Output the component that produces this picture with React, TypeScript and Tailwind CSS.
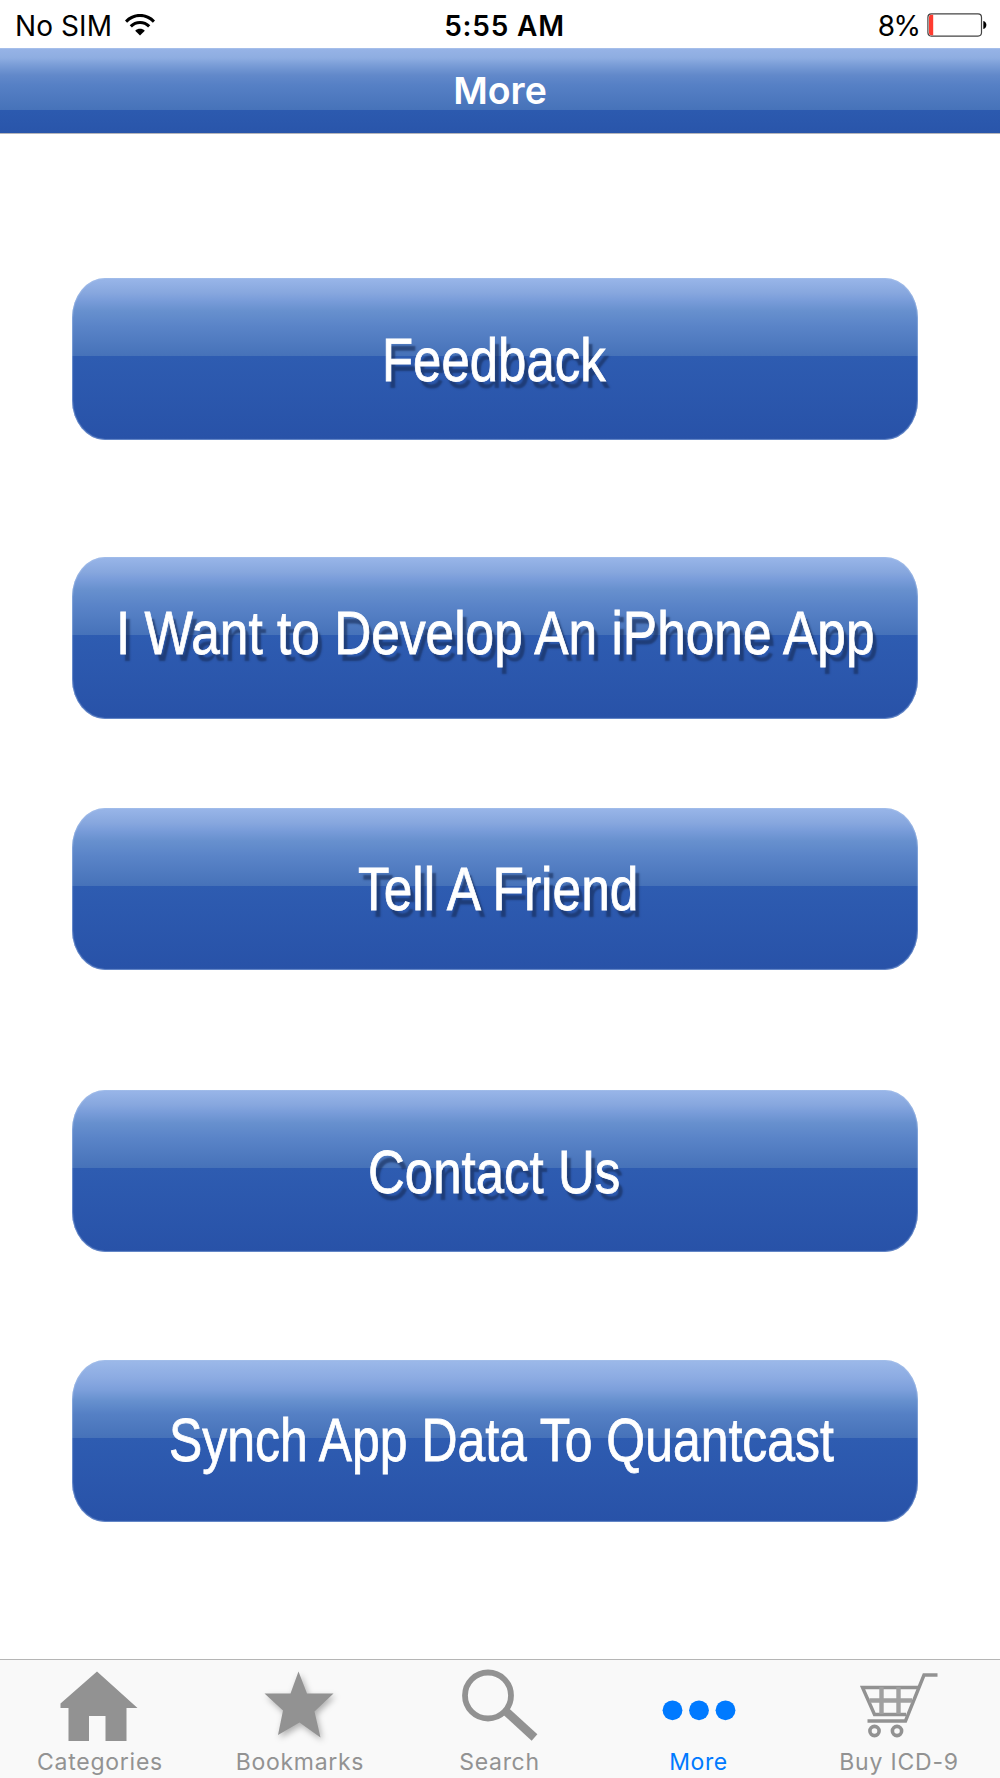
import React from 'react';

const WifiIcon: React.FC<{ className?: string }> = ({ className }) => (
  <svg className={className} viewBox="0 0 30 22" fill="none" stroke="#000" strokeWidth="3.1">
    <path d="M1 7.6C9 -0.6 21 -0.6 29 7.6" />
    <path d="M5.8 12.4C11 7.2 19 7.2 24.2 12.4" />
    <path d="M15 21.6L10.2 16.7C12.9 14.1 17.1 14.1 19.8 16.7Z" fill="#000" stroke="none" />
  </svg>
);

const BatteryIcon: React.FC<{ className?: string }> = ({ className }) => (
  <svg className={className} viewBox="0 0 60 24" fill="none">
    <rect x="0.9" y="0.9" width="53.6" height="22.2" rx="3.5" stroke="#444" strokeWidth="1.2" />
    <path d="M2 4a2.2 2.2 0 0 1 2.2-2.2H6.2V22.2H4.2A2.2 2.2 0 0 1 2 20Z" fill="#ff3b30" />
    <path d="M56.3 8C60.4 8.6 60.4 15.4 56.3 16Z" fill="#000" />
  </svg>
);

const HomeIcon = () => (
  <svg className="w-[78px] h-[72px] mr-[3px]" viewBox="0 0 78 72" fill="#929292">
    <path d="M37 0.5L77.5 37H66.5V70H45.5V45H29V70H8.5V37H0.5V32.5Z" />
  </svg>
);

const StarIcon = () => (
  <svg className="w-[78px] h-[72px] overflow-visible drop-shadow-[2px_3px_3px_rgba(0,0,0,0.3)]" viewBox="0 0 78 72" fill="#929292">
    <path d="M37.5 0.5L46 22.5H72.5L53.5 40.5L59.5 66.5L38.5 51.5L17 64L22 39.5L3.5 22.5H29.5Z" />
  </svg>
);

const SearchIcon = () => (
  <svg className="w-[78px] h-[72px] overflow-visible" viewBox="0 0 78 72" fill="none" stroke="#929292">
    <circle cx="27" cy="24.5" r="23" strokeWidth="5.8" />
    <path d="M44.5 40L73.5 66.5" strokeWidth="8.5" />
  </svg>
);

const MoreIcon = () => (
  <svg className="w-[74px] h-[72px] mr-[3px]" viewBox="0 0 74 72" fill="#007aff">
    <circle cx="10.5" cy="39.3" r="9.9" />
    <circle cx="37" cy="39.3" r="9.9" />
    <circle cx="63.5" cy="39.3" r="9.9" />
  </svg>
);

const CartIcon = () => (
  <svg className="w-[78px] h-[72px] mr-[2px]" viewBox="0 0 78 72" fill="none" stroke="#929292" strokeWidth="3.4">
    <path d="M77.5 4H64L45.5 50H7.5" />
    <path d="M58 16.5H2.5L14.5 43.500H46" />
    <path d="M9.5 29.5H52M21.5 16V43M38.5 16V43" stroke="#a0a0a0" strokeWidth="4.4" />
    <circle cx="14.5" cy="60" r="4.6" strokeWidth="3.6" />
    <circle cx="37" cy="60" r="4.6" strokeWidth="3.6" />
  </svg>
);

const shadow = '[text-shadow:5px_7px_2px_rgba(22,42,84,0.6)]';
const glossy = 'bg-[linear-gradient(to_bottom,#99b6e9_0px,#87a7de_15px,#7a9dda_22px,#6790ce_33px,#5a84c8_48px,#4672b9_78px,#2e5cb1_78px,#2852a8_162px)]';
const glossyLight = 'bg-[linear-gradient(to_bottom,#9cb9e9_0px,#8cabe2_18px,#7c9fdb_30px,#6690ce_41px,#5580c5_54px,#4672b9_78px,#2e5cb1_78px,#2852a8_162px)]';

const buttons = [
  { label: 'Feedback', box: `mt-[144px] ${glossy}`, text: `pl-[309.5px] pt-[47px] ${shadow}`, scale: 'scale-x-[0.835]' },
  { label: 'I Want to Develop An iPhone App', box: `mt-[116.5px] ${glossy}`, text: `pl-[43.5px] pt-[41.5px] ${shadow}`, scale: 'scale-x-[0.843]' },
  { label: 'Tell A Friend', box: `mt-[89.5px] ${glossy}`, text: `pl-[285.5px] pt-[46px] ${shadow}`, scale: 'scale-x-[0.844]' },
  { label: 'Contact Us', box: `mt-[120px] ${glossy}`, text: `pl-[295.5px] pt-[47px] ${shadow}`, scale: 'scale-x-[0.836]' },
  { label: 'Synch App Data To Quantcast', box: `mt-[108px] ${glossyLight}`, text: 'pl-[97px] pt-[45px]', scale: 'scale-x-[0.818]' },
];

const tabs = [
  { name: 'Categories', icon: <HomeIcon />, active: false, tracking: 'tracking-[0.75px]' },
  { name: 'Bookmarks', icon: <StarIcon />, active: false, tracking: 'tracking-[0.7px]' },
  { name: 'Search', icon: <SearchIcon />, active: false, tracking: 'tracking-[0.7px] mr-[1px]' },
  { name: 'More', icon: <MoreIcon />, active: true, tracking: 'tracking-[0.6px] mr-[3px]' },
  { name: 'Buy ICD-9', icon: <CartIcon />, active: false, tracking: 'tracking-[0.8px] mr-[2px]' },
];

const StatusBar: React.FC = () => {
  return (
    <div className="grid grid-cols-3 items-center h-12 pt-[3px] pl-[15px] pr-[13px] text-[28px] leading-none text-black">
      <div className="flex items-center">
        <span className="tracking-[0.1px]">No SIM</span>
        <WifiIcon className="w-[30px] h-[22px] ml-[13px] -mt-[2px]" />
      </div>
      <span className="pl-[7px] text-center font-semibold tracking-[0.8px]">5:55 AM</span>
      <div className="flex items-center justify-end">
        <span className="tracking-[-1.5px]">8%</span>
        <BatteryIcon className="w-[60px] h-6 ml-[7.5px] -mt-px" />
      </div>
    </div>
  );
};

const NavBar: React.FC = () => {
  return (
    <header className="flex justify-center h-[86px] pt-[24px] border-b border-[#b5b5ba] bg-[linear-gradient(to_bottom,#b4c9ee_0px,#96b3e6_1px,#8eade1_10px,#7a9dd7_17px,#6289ca_27px,#5680c5_37px,#4672b9_62.5px,#2c5aaf_62.5px,#2955aa_86px)]">
      <h1 className="text-[37.5px] leading-none font-semibold text-white">More</h1>
    </header>
  );
};

const TabBar: React.FC = () => {
  return (
    <nav className="grid grid-cols-5 h-[119px] mt-auto border-t border-[#b5b5b5] bg-[#f9f9f9]">
      {tabs.map((tab) => (
        <a key={tab.name} className={`flex flex-col items-center pt-[11px] ${tab.active ? 'text-[#007aff]' : 'text-[#929292]'}`}>
          {tab.icon}
          <span className={`mt-[6px] text-[23px] leading-[26px] whitespace-nowrap ${tab.tracking}`}>{tab.name}</span>
        </a>
      ))}
    </nav>
  );
};

const App: React.FC = () => {
  return (
    <div className="flex flex-col w-[1000px] h-[1778px] bg-white overflow-hidden font-['Inter',sans-serif]">
      <StatusBar />
      <NavBar />
      <main className="flex flex-col pl-[72px]">
        {buttons.map((button) => (
          <button
            key={button.label}
            className={`block w-[846px] h-[162px] text-left rounded-[33px/40px] shadow-[inset_0_0_1px_1px_rgba(170,195,235,0.5)] ${button.box}`}
          >
            <span className={`block h-full ${button.text}`}>
              <span className={`inline-block origin-left font-['Liberation_Sans',sans-serif] text-[61px] leading-[70px] whitespace-nowrap text-white [-webkit-text-stroke:0.8px_white] ${button.scale}`}>
                {button.label}
              </span>
            </span>
          </button>
        ))}
      </main>
      <TabBar />
    </div>
  );
};

export default App;
